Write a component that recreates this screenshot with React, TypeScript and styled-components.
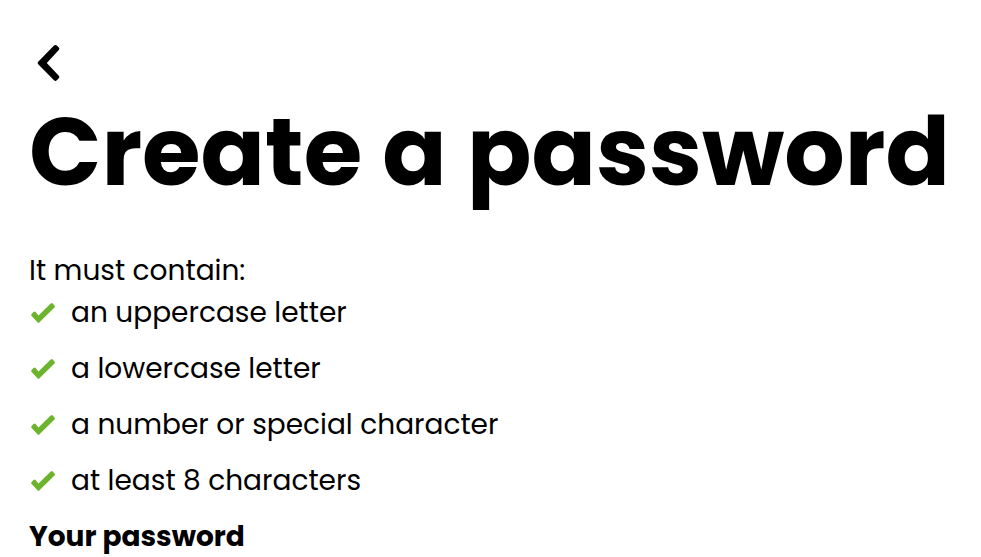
import React from "react";
import styled, { createGlobalStyle } from "styled-components";

const GlobalStyle = createGlobalStyle`
  * { box-sizing: border-box; }
  body {
    margin: 0;
    background: #fff;
    color: #000;
    font-family: Poppins, Inter, sans-serif;
    font-weight: 400;
  }
`;

const Page = styled.main`
  padding: 40px 29px 0;
`;

const BackButton = styled.button`
  display: block;
  padding: 0 8px;
  border: 0;
  background: none;
  color: inherit;
  cursor: pointer;
  svg { display: block; }
`;

const Title = styled.h1`
  margin: 0 0 37px;
  font-size: 95px;
  line-height: 136px;
  font-weight: 700;
  white-space: nowrap;
`;

const Intro = styled.p`
  margin: 0;
  font-size: 28px;
  line-height: 28px;
`;

const Rules = styled.ul`
  margin: 0;
  padding: 0;
  list-style: none;
`;

const Rule = styled.li`
  display: flex;
  align-items: center;
  gap: 14px;
  height: 56px;
  font-size: 28px;
`;

const SectionTitle = styled.h2`
  margin: 8px 0 0;
  font-size: 28px;
  line-height: 40px;
  font-weight: 700;
`;

const Check = () => (
  <svg width="28" height="24" viewBox="0 0 28 24" aria-hidden="true">
    <path
      d="M4.6 11L2.6 13Q1.6 14 2.6 15L8.5 21.2Q9.5 22.2 10.5 21.2L25.5 6.4Q26.5 5.4 25.5 4.4L23.7 2.5Q22.7 1.5 21.7 2.5L9.5 14.4L6.6 11Q5.6 10 4.6 11Z"
      fill="#6cb42c"
    />
  </svg>
);

const rules = [
  "an uppercase letter",
  "a lowercase letter",
  "a number or special character",
  "at least 8 characters",
];

export default function App() {
  return (
    <>
      <GlobalStyle />
      <Page>
        <BackButton type="button" aria-label="Back">
          <svg width="24" height="44" viewBox="0 0 24 44">
            <path
              d="M17 5.6Q18.5 4.3 19.8 5.6L21.8 7.6Q23 8.8 21.8 10.1L9.8 23L21.8 35.8Q23 37 21.8 38.2L19.8 40.3Q18.5 41.6 17 40.3L1.2 24.3Q0 23 1.2 21.7Z"
              fill="currentColor"
            />
          </svg>
        </BackButton>
        <Title>Create a password</Title>
        <Intro>It must contain:</Intro>
        <Rules>
          {rules.map((rule) => (
            <Rule key={rule}>
              <Check />
              {rule}
            </Rule>
          ))}
        </Rules>
        <SectionTitle>Your password</SectionTitle>
      </Page>
    </>
  );
}
